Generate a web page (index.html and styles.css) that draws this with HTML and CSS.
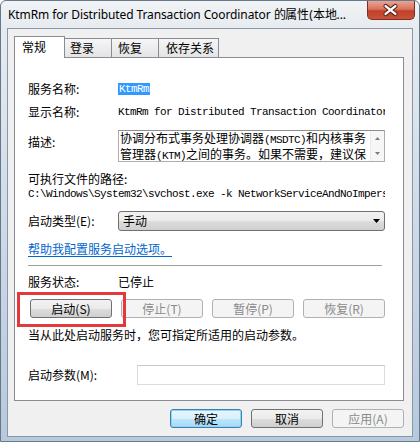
FILE: index.html
```html
<!DOCTYPE html>
<html lang="zh-CN">
<head>
<meta charset="utf-8">
<title>KtmRm 属性</title>
<link rel="stylesheet" href="styles.css">
</head>
<body>
<div class="window">
  <div class="titlebar">
    <span class="title">KtmRm for Distributed Transaction Coordinator 的属性(本地...</span>
    <div class="close">
      <svg width="48" height="19" viewBox="0 0 48 19">
        <path d="M19 5 L29 13 M29 5 L19 13" stroke="#5b2219" stroke-width="4.5" stroke-linecap="round" fill="none"/>
        <path d="M19 5 L29 13 M29 5 L19 13" stroke="#ffffff" stroke-width="2.4" stroke-linecap="round" fill="none"/>
      </svg>
    </div>
  </div>
  <div class="client">
    <div class="tabs">
      <div class="tab active">常规</div>
      <div class="tab t2">登录</div>
      <div class="tab t3">恢复</div>
      <div class="tab t4">依存关系</div>
    </div>
    <div class="panel">
      <div class="row r1">
        <span class="label">服务名称:</span>
        <span class="mono selected">KtmRm</span>
      </div>
      <div class="row r2">
        <span class="label">显示名称:</span>
        <span class="mono clip">KtmRm for Distributed Transaction Coordinator</span>
      </div>
      <div class="row r3">
        <span class="label desc-label">描述:</span>
        <div class="textarea">
          <div class="ta-text">
            <div class="ta-line">协调分布式事务处理协调器<span class="mono">(MSDTC)</span>和内核事务</div>
            <div class="ta-line">管理器<span class="mono">(KTM)</span>之间的事务。如果不需要，建议保</div>
          </div>
          <div class="scrollbar">
            <svg width="13" height="14" viewBox="0 0 13 14"><path d="M4 9 L9 9 L6.5 6 Z" fill="#7a7a7a"/></svg>
            <svg width="13" height="14" viewBox="0 0 13 14"><path d="M4 5 L9 5 L6.5 8 Z" fill="#7a7a7a"/></svg>
          </div>
        </div>
      </div>
      <div class="row r4"><span>可执行文件的路径:</span></div>
      <div class="row r5"><span class="mono path">C:\Windows\System32\svchost.exe -k NetworkServiceAndNoImpersonation</span></div>
      <div class="row r6">
        <span class="label">启动类型(E):</span>
        <div class="select">
          <span>手动</span>
          <svg width="8" height="5" viewBox="0 0 8 5"><path d="M0 0 L7 0 L3.5 4 Z" fill="#000"/></svg>
        </div>
      </div>
      <div class="row r7"><a class="link" href="#">帮助我配置服务启动选项。</a></div>
      <div class="sep"></div>
      <div class="row r8">
        <span class="label">服务状态:</span>
        <span>已停止</span>
      </div>
      <div class="row r9">
        <div class="btn w82">启动(S)</div>
        <div class="btn w82 disabled">停止(T)</div>
        <div class="btn w82 disabled">暂停(P)</div>
        <div class="btn w82 disabled">恢复(R)</div>
        <div class="highlight"></div>
      </div>
      <div class="row r10"><span>当从此处启动服务时，您可指定所适用的启动参数。</span></div>
      <div class="row r11">
        <span class="label wide">启动参数(M):</span>
        <div class="input"></div>
      </div>
    </div>
    <div class="dialog-buttons">
      <div class="btn w72 default">确定</div>
      <div class="btn w72">取消</div>
      <div class="btn w72 disabled">应用(A)</div>
    </div>
  </div>
</div>
</body>
</html>
```
FILE: styles.css
```css
html, body {
  margin: 0;
  padding: 0;
}
body {
  width: 420px;
  height: 442px;
  overflow: hidden;
  background: #ffffff;
  font-family: "Noto Sans CJK SC", sans-serif;
  font-size: 12px;
  color: #000;
}
.window {
  width: 420px;
  height: 442px;
  box-sizing: border-box;
  display: flex;
  flex-direction: column;
  border: 1px solid #66788c;
  border-radius: 6px 6px 0 0;
  background: linear-gradient(to bottom, #f1f3f5 0px, #e6ebf0 28px, #c9d6e4 60%, #b7c9dd 100%);
}
.titlebar {
  height: 27px;
  display: flex;
  justify-content: space-between;
  align-items: flex-start;
  flex-shrink: 0;
}
.title {
  font-family: "Noto Sans", sans-serif;
  font-size: 12px;
  line-height: 16px;
  padding: 6px 0 0 7px;
  color: #000;
  white-space: nowrap;
  letter-spacing: -0.1px;
}
.close {
  width: 48px;
  height: 19px;
  margin-right: 4px;
  box-sizing: border-box;
  border: 1px solid #7d2d22;
  border-top: none;
  border-radius: 0 0 5px 5px;
  background: linear-gradient(to bottom, #e8a593 0%, #d9735e 45%, #c3402a 55%, #c8523a 100%);
  display: flex;
  overflow: hidden;
}
.close svg {
  display: block;
  margin-left: -1px;
}
.client {
  flex: 1;
  margin: 0 6px 4px 6px;
  border: 1px solid #8996a6;
  background: #f0f0f0;
  padding: 7px 8px 8px 6px;
  display: flex;
  flex-direction: column;
}
.tabs {
  height: 21px;
  display: flex;
  align-items: flex-end;
  flex-shrink: 0;
}
.tab {
  height: 19px;
  box-sizing: border-box;
  border: 1px solid #898c95;
  border-bottom: none;
  background: linear-gradient(to bottom, #f6f6f6, #e4e4e4);
  line-height: 18px;
  padding-left: 6px;
  margin-left: -1px;
  white-space: nowrap;
}
.tab.active {
  position: relative;
  z-index: 1;
  height: 22px;
  margin-bottom: -1px;
  margin-left: 0;
  width: 51px;
  background: #ffffff;
  line-height: 20px;
  padding-left: 7px;
}
.t2 { width: 48px; padding-left: 5px; }
.t3 { width: 48px; }
.t4 { width: 61px; padding-left: 7px; }
.panel {
  height: 344px;
  box-sizing: border-box;
  flex-shrink: 0;
  border: 1px solid #898c95;
  background: #ffffff;
  padding: 12px 0 0 13px;
}
.row {
  display: flex;
  align-items: center;
  line-height: 14px;
}
.label {
  width: 90px;
  flex-shrink: 0;
}
.label.wide { width: 109px; }
.mono {
  font-family: "Liberation Mono", monospace;
  font-size: 11px;
  letter-spacing: -0.6px;
}
.selected {
  background: #3399ff;
  color: #ffffff;
  padding: 0 1px;
  line-height: 12px;
}
.clip {
  width: 267px;
  overflow: hidden;
  white-space: nowrap;
}
.r1 { margin-top: 12px; height: 14px; }
.r2 { margin-top: 9px; height: 14px; }
.r3 { margin-top: 11px; align-items: flex-start; }
.desc-label { padding-top: 5px; }
.textarea {
  width: 267px;
  height: 32px;
  box-sizing: border-box;
  border: 1px solid #abadb3;
  border-top-color: #8e8f8f;
  display: flex;
  justify-content: space-between;
}
.ta-text {
  padding: 0 0 0 1px;
  overflow: hidden;
}
.ta-line {
  line-height: 13px;
  white-space: nowrap;
}
.ta-line .mono { font-size: 11px; }
.scrollbar {
  width: 13px;
  flex-shrink: 0;
  background: #f6f6f6;
  border-left: 1px solid #eaeaea;
  display: flex;
  flex-direction: column;
  justify-content: space-between;
}
.scrollbar svg { display: block; }
.r4 { margin-top: 10px; height: 14px; }
.r5 { margin-top: 1px; height: 14px; }
.path {
  width: 357px;
  overflow: hidden;
  white-space: nowrap;
}
.r6 { margin-top: 10px; }
.select {
  width: 267px;
  height: 20px;
  box-sizing: border-box;
  border: 1px solid #707070;
  border-radius: 3px;
  background: linear-gradient(to bottom, #f2f2f2 0%, #ebebeb 50%, #dddddd 51%, #cfcfcf 100%);
  display: flex;
  align-items: center;
  justify-content: space-between;
  padding: 0 3px 0 4px;
}
.select svg { display: block; margin-top: 1px; }
.r7 { margin-top: 11px; height: 14px; }
.link {
  color: #0066cc;
  text-decoration: underline;
  text-underline-offset: 2px;
}
.sep {
  margin-top: 9px;
  width: 354px;
  height: 1px;
  background: #a0a0a0;
}
.r8 { margin-top: 9px; height: 14px; }
.r9 {
  margin-top: 10px;
  padding-left: 2px;
  gap: 9px;
  position: relative;
}
.btn {
  height: 19px;
  box-sizing: border-box;
  border: 1px solid #707070;
  border-radius: 3px;
  background: linear-gradient(to bottom, #f2f2f2 0%, #ebebeb 50%, #dddddd 51%, #cfcfcf 100%);
  display: flex;
  align-items: center;
  justify-content: center;
  font-size: 12px;
  line-height: 14px;
  flex-shrink: 0;
  color: #000;
}
.w82 { width: 82px; }
.w72 { width: 72px; }
.btn.disabled {
  border-color: #adb2b5;
  background: #f4f4f4;
  color: #8a8a8a;
}
.btn.default {
  border-color: #3c7fb1;
  background: linear-gradient(to bottom, #eaf6fd 0%, #d9f0fc 50%, #bee6fd 51%, #a7d9f5 100%);
  box-shadow: inset 0 0 0 1px #8fd4f8;
}
.highlight {
  position: absolute;
  left: -11px;
  top: -7px;
  width: 109px;
  height: 35px;
  box-sizing: border-box;
  border: 3px solid #e3393a;
}
.r10 { margin-top: 10px; height: 14px; }
.r11 { margin-top: 23px; }
.input {
  width: 248px;
  height: 20px;
  box-sizing: border-box;
  border: 1px solid #dcdcdc;
  border-top-color: #c8c8c8;
}
.dialog-buttons {
  margin-top: 8px;
  display: flex;
  justify-content: flex-end;
  gap: 9px;
}
```
